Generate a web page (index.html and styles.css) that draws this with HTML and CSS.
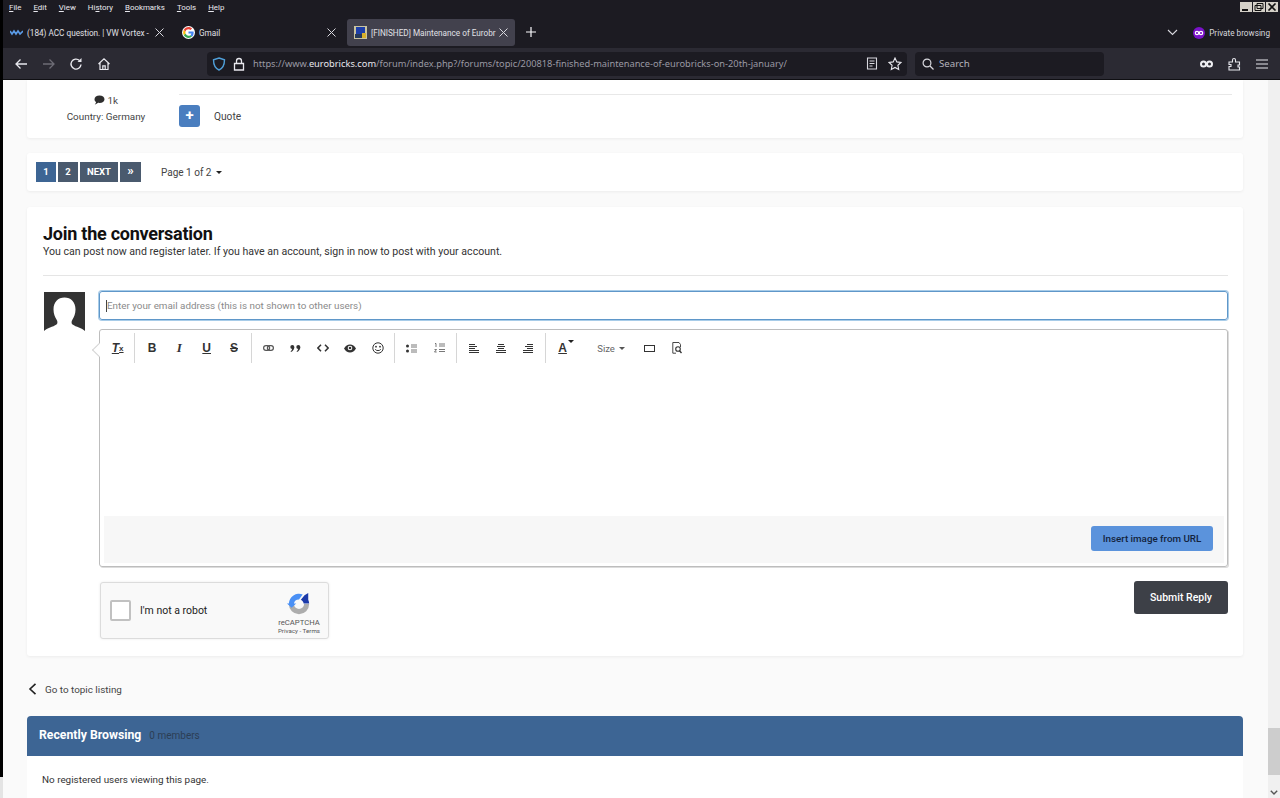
FILE: index.html
```html
<!DOCTYPE html>
<html lang="en">
<head>
    <meta charset="UTF-8">
    <meta name="viewport" content="width=device-width, initial-scale=1.0">
    <title>[FINISHED] Maintenance of Eurobricks</title>
    <link rel="stylesheet" href="styles.css">
</head>
<body>
    <!-- browser chrome -->
    <header class="chrome">
        <div class="menubar">
            <span><u>F</u>ile</span>
            <span><u>E</u>dit</span>
            <span><u>V</u>iew</span>
            <span>Hi<u>s</u>tory</span>
            <span><u>B</u>ookmarks</span>
            <span><u>T</u>ools</span>
            <span><u>H</u>elp</span>
            <div class="win-btns">
                <span class="win-btn"><svg width="10" height="8" viewBox="0 0 10 8"><path d="M1 6h6v2H1z" fill="#111"/></svg></span>
                <span class="win-btn"><svg width="10" height="8" viewBox="0 0 10 8"><path d="M3 .5h6v5H3zM1 2.500h6v5H1z" fill="none" stroke="#111"/></svg></span>
                <span class="win-btn"><svg width="10" height="8" viewBox="0 0 10 8"><path d="M1.500 .5l7 7M8.500 .5l-7 7" stroke="#111" stroke-width="1.600"/></svg></span>
            </div>
        </div>
        <div class="tabbar">
            <div class="tab">
                <svg class="tab-icon" width="13" height="13" viewBox="0 0 13 13"><path d="M0 5l2 3 2-3 2 3 2-3 2 3 3-3" fill="none" stroke="#5b9be6" stroke-width="1.600"/></svg>
                <span class="tab-title">(184) ACC question. | VW Vortex -</span>
                <svg class="tab-x" width="9" height="9" viewBox="0 0 9 9"><path d="M.5 .5l8 8M8.500 .5l-8 8" stroke="#d8d8de"/></svg>
            </div>
            <div class="tab">
                <svg class="tab-icon" width="13" height="13" viewBox="0 0 48 48"><circle cx="24" cy="24" r="24" fill="#fff"/><path d="M43 24.500c0-1.400-.1-2.700-.4-4H24v7.600h10.800c-.5 2.500-1.900 4.600-4 6l6.400 5c3.700-3.500 5.800-8.600 5.800-14.600z" fill="#4285f4"/><path d="M24 44c5.300 0 9.700-1.700 13-4.900l-6.400-5c-1.700 1.200-4 2-6.600 2-5.100 0-9.400-3.400-10.900-8l-6.600 5.100C9.800 39.700 16.400 44 24 44z" fill="#34a853"/><path d="M13.100 28.100c-.8-2.600-.8-5.500 0-8.200l-6.600-5.100c-2.800 5.600-2.800 12.800 0 18.400z" fill="#fbbc05"/><path d="M24 11.900c2.900 0 5.500 1 7.500 2.900l5.600-5.600C33.700 6 29.300 4 24 4 16.400 4 9.800 8.300 6.500 14.800l6.600 5.100c1.500-4.600 5.800-8 10.900-8z" fill="#ea4335"/></svg>
                <span class="tab-title">Gmail</span>
                <svg class="tab-x" width="9" height="9" viewBox="0 0 9 9"><path d="M.5 .5l8 8M8.500 .5l-8 8" stroke="#d8d8de"/></svg>
            </div>
            <div class="tab tab-active">
                <svg class="tab-icon" width="13" height="13" viewBox="0 0 13 13"><path d="M0 0h13v13H0z" fill="#c9c4a0"/><path d="M2 1h9v7H2z" fill="#1e3fa8"/><path d="M1 8h7v4H1z" fill="#263a5c"/><path d="M8 7h4v5H8z" fill="#d8b02a"/></svg>
                <span class="tab-title">[FINISHED] Maintenance of Eurobr</span>
                <svg class="tab-x" width="9" height="9" viewBox="0 0 9 9"><path d="M.5 .5l8 8M8.500 .5l-8 8" stroke="#d8d8de"/></svg>
            </div>
            <svg class="new-tab" width="10" height="10" viewBox="0 0 10 10"><path d="M5 0v10M0 5h10" stroke="#fbfbfe" stroke-width="1.200"/></svg>
            <div class="tabbar-right">
                <svg class="tab-list" width="11" height="7" viewBox="0 0 11 7"><path d="M1 1l4.500 4.500L10 1" fill="none" stroke="#d8d8de" stroke-width="1.100"/></svg>
                <svg width="12" height="12" viewBox="0 0 12 12"><circle cx="6" cy="6" r="6" fill="#7a12c9"/><circle cx="4" cy="6" r="1.700" fill="none" stroke="#fff" stroke-width="1.200"/><circle cx="8" cy="6" r="1.700" fill="none" stroke="#fff" stroke-width="1.200"/></svg>
                <span class="private-label">Private browsing</span>
            </div>
        </div>
        <div class="navbar">
            <div class="nav-btns">
                <svg width="14" height="14" viewBox="0 0 14 14"><path d="M13 7H2M6.500 2.500L2 7l4.500 4.500" fill="none" stroke="#e8e8ee" stroke-width="1.300"/></svg>
                <svg width="14" height="14" viewBox="0 0 14 14"><path d="M1 7h11M7.500 2.500L12 7l-4.500 4.500" fill="none" stroke="#6d6c75" stroke-width="1.300"/></svg>
                <svg width="14" height="14" viewBox="0 0 14 14"><path d="M12 7.500A5 5 0 1 1 10.500 3.500" fill="none" stroke="#e8e8ee" stroke-width="1.400"/><path d="M12.500 1v4h-4z" fill="#e8e8ee"/></svg>
                <svg width="14" height="14" viewBox="0 0 14 14"><path d="M1.500 7L7 1.800 12.500 7M3 6v6.500h8V6M5.800 12.500V8.800h2.400v3.700" fill="none" stroke="#e8e8ee" stroke-width="1.200"/></svg>
            </div>
            <div class="urlbar">
                <svg class="url-shield" width="14" height="14" viewBox="0 0 14 14"><path d="M7 1l5.500 1.800c0 5-1.500 8.500-5.500 10.200C3 11.300 1.500 7.800 1.500 2.800z" fill="none" stroke="#4f9fd8" stroke-width="1.400"/></svg>
                <svg class="url-lock" width="12" height="14" viewBox="0 0 12 14"><path d="M1.500 6.500h9v6.500h-9zM3.500 6.500V4a2.500 2.500 0 0 1 5 0v2.500" fill="none" stroke="#e8e8ee" stroke-width="1.300"/></svg>
                <span class="url-text">https://www.<b>eurobricks.com</b>/forum/index.php?/forums/topic/200818-finished-maintenance-of-eurobricks-on-20th-january/</span>
                <svg class="url-reader" width="12" height="13" viewBox="0 0 12 13"><path d="M1.500 1h9v11h-9zM3.500 4h5M3.500 6.500h5M3.500 9h3" fill="none" stroke="#d8d8de" stroke-width="1.100"/></svg>
                <svg class="url-star" width="14" height="14" viewBox="0 0 14 14"><path d="M7 1l1.800 3.900 4.200.5-3.100 2.900.8 4.200L7 10.400l-3.700 2.100.8-4.200L1 5.400l4.200-.5z" fill="none" stroke="#e8e8ee" stroke-width="1.100"/></svg>
            </div>
            <div class="searchbar">
                <svg width="12" height="12" viewBox="0 0 12 12"><circle cx="5" cy="5" r="3.900" fill="none" stroke="#d8d8de" stroke-width="1.200"/><path d="M8 8l3.500 3.500" stroke="#d8d8de" stroke-width="1.300"/></svg>
                <span>Search</span>
            </div>
            <div class="nav-right">
                <svg width="13" height="8" viewBox="0 0 13 8"><circle cx="3.500" cy="4" r="2.500" fill="none" stroke="#f0f0f4" stroke-width="2"/><circle cx="9.500" cy="4" r="2.500" fill="none" stroke="#f0f0f4" stroke-width="2"/></svg>
                <svg width="13" height="14" viewBox="0 0 13 14"><path d="M1 5h3.500V3a1.500 1.500 0 0 1 3 0v2h4v3H10v2h1.500v3H1V9.500h2v-2H1z" fill="none" stroke="#e8e8ee" stroke-width="1.100"/></svg>
                <svg width="12" height="10" viewBox="0 0 12 10"><path d="M0 1h12M0 5h12M0 9h12" stroke="#e8e8ee" stroke-width="1.200"/></svg>
            </div>
        </div>
    </header>

    <div class="viewport">
        <main class="page">
            <section class="card post-end">
                <div class="author">
                    <div class="author-count">
                        <svg width="11" height="10" viewBox="0 0 11 10"><path d="M5.500.5c2.900 0 5 1.600 5 3.700S8.400 7.900 5.500 7.900c-.5 0-1 0-1.400-.1C3.200 8.700 2 9.300.8 9.400c.7-.7 1.200-1.500 1.300-2.300C1 6.400.5 5.400.5 4.200.5 2.100 2.600.5 5.500.5z" fill="#2e2e2e"/></svg>
                        1k
                    </div>
                    <div>Country: Germany</div>
                </div>
                <div class="post-actions">
                    <div class="action-row">
                        <span class="plus-btn">+</span>
                        <span>Quote</span>
                    </div>
                </div>
            </section>

            <section class="card pager">
                <span class="page-btn page-current">1</span>
                <span class="page-btn">2</span>
                <span class="page-btn page-next">NEXT</span>
                <span class="page-btn page-last">»</span>
                <span class="page-of">Page 1 of 2 <i class="caret"></i></span>
            </section>

            <section class="card join">
                <h2>Join the conversation</h2>
                <p class="join-sub">You can post now and register later. If you have an account, sign in now to post with your account.</p>
                <div class="reply-row">
                    <svg class="avatar" width="41" height="42" viewBox="0 0 41 42"><path d="M0 0h41v42H0z" fill="#333"/><path d="M0 42v-3c3-3 9-4 12.500-6.500 1.500-1.300 1-3.500 0-5-1.500-2.500-3-5.500-3-10C9.500 10 14 5.500 20.500 5.500S31.500 10 31.500 17.500c0 4.500-1.500 7.500-3 10-1 1.500-1.500 3.700 0 5C32 35 38 36 41 39v3z" fill="#fff"/></svg>
                    <div class="reply-form">
                        <div class="email-input"><span class="cursor"></span>Enter your email address (this is not shown to other users)</div>
                        <div class="editor">
                            <div class="ed-toolbar">
                                <div class="ed-group">
                                    <span class="ed-btn ed-clear">T<sub>x</sub></span>
                                </div>
                                <div class="ed-group">
                                    <span class="ed-btn ed-b">B</span>
                                    <span class="ed-btn ed-i">I</span>
                                    <span class="ed-btn ed-u">U</span>
                                    <span class="ed-btn ed-s">S</span>
                                </div>
                                <div class="ed-group">
                                    <span class="ed-btn"><svg width="11" height="6" viewBox="0 0 11 6"><rect x=".6" y=".6" width="6" height="4.800" rx="2.400" fill="none" stroke="#555" stroke-width="1.200"/><rect x="4.400" y=".6" width="6" height="4.800" rx="2.400" fill="none" stroke="#555" stroke-width="1.200"/></svg></span>
                                    <span class="ed-btn"><svg width="11" height="7" viewBox="0 0 11 7"><circle cx="2.300" cy="2.100" r="2" fill="#333"/><path d="M4.300 2.100C4.300 4.500 3 6.300 1 7l-.4-.8c1-.6 1.500-1.600 1.500-3z" fill="#333"/><circle cx="8.300" cy="2.100" r="2" fill="#333"/><path d="M10.300 2.100c0 2.400-1.300 4.200-3.300 4.900l-.4-.8c1-.6 1.500-1.600 1.500-3z" fill="#333"/></svg></span>
                                    <span class="ed-btn"><svg width="12" height="8" viewBox="0 0 12 8"><path d="M4 .8L.9 4 4 7.200M8 .8L11.100 4 8 7.200" fill="none" stroke="#333" stroke-width="1.500"/></svg></span>
                                    <span class="ed-btn"><svg width="12" height="9" viewBox="0 0 12 9"><path d="M0 4.500C1.500 2 3.500.5 6 .5s4.500 1.500 6 4c-1.500 2.500-3.500 4-6 4s-4.500-1.500-6-4z" fill="#333"/><circle cx="6" cy="4" r="2.300" fill="#fff"/><circle cx="6" cy="4" r="1.300" fill="#333"/></svg></span>
                                    <span class="ed-btn"><svg width="12" height="12" viewBox="0 0 12 12"><circle cx="6" cy="6" r="5.200" fill="none" stroke="#333" stroke-width="1"/><circle cx="4" cy="4.700" r=".9" fill="#333"/><circle cx="8" cy="4.700" r=".9" fill="#333"/><path d="M3.200 7.300C4 9 8 9 8.800 7.300" fill="none" stroke="#333"/></svg></span>
                                </div>
                                <div class="ed-group">
                                    <span class="ed-btn"><svg width="11" height="9" viewBox="0 0 11 9"><circle cx="1.500" cy="2" r="1.500" fill="#333"/><circle cx="1.500" cy="7" r="1.500" fill="#333"/><path d="M5 1h6M5 3h6M5 6h6M5 8h6" stroke="#555" stroke-width=".8"/></svg></span>
                                    <span class="ed-btn"><svg width="11" height="10" viewBox="0 0 11 10"><path d="M1 .5h1V4M.5 6.500h2L.5 9h2.200" fill="none" stroke="#444" stroke-width=".7"/><path d="M5 1h6M5 3h6M5 6.500h6M5 8.500h6" stroke="#555" stroke-width=".8"/></svg></span>
                                </div>
                                <div class="ed-group">
                                    <span class="ed-btn"><svg width="10" height="9" viewBox="0 0 10 9"><path d="M0 .5h6M0 2.500h8M0 4.500h6M0 6.500h10M0 8.500h10" stroke="#333"/></svg></span>
                                    <span class="ed-btn"><svg width="10" height="9" viewBox="0 0 10 9"><path d="M2 .5h6M1 2.500h8M2 4.500h6M0 6.500h10M0 8.500h10" stroke="#333"/></svg></span>
                                    <span class="ed-btn"><svg width="10" height="9" viewBox="0 0 10 9"><path d="M4 .5h6M2 2.500h8M4 4.500h6M0 6.500h10M0 8.500h10" stroke="#333"/></svg></span>
                                </div>
                                <div class="ed-group ed-last">
                                    <span class="ed-btn ed-color">A<i class="caret caret-small"></i></span>
                                    <span class="ed-size">Size <i class="caret caret-small"></i></span>
                                    <span class="ed-btn"><svg width="11" height="7" viewBox="0 0 11 7"><rect x=".5" y=".5" width="10" height="6" fill="none" stroke="#333"/></svg></span>
                                    <span class="ed-btn"><svg width="10" height="12" viewBox="0 0 10 12"><path d="M7 .5H.8v10.700H4M7 .5l1.500 2V5" fill="none" stroke="#333" stroke-width=".9"/><circle cx="6" cy="7" r="2.300" fill="none" stroke="#333" stroke-width="1.100"/><path d="M7.500 8.700L9.500 11" stroke="#333" stroke-width="1.300"/></svg></span>
                                </div>
                            </div>
                            <div class="ed-area"></div>
                            <div class="ed-footer">
                                <span class="insert-btn">Insert image from URL</span>
                            </div>
                            <i class="ed-nib"></i>
                        </div>
                        <div class="submit-row">
                            <div class="recaptcha">
                                <span class="rc-check"></span>
                                <span class="rc-label">I'm not a robot</span>
                                <div class="rc-brand">
                                    <svg width="24" height="24" viewBox="0 0 26 26"><path d="M2 13A11 11 0 0 0 24 13H18.500A5.500 5.500 0 0 1 7.500 13z" fill="#adadad"/><path d="M2 12.500A11 11 0 0 1 17 2.700L13 8A5.500 5.500 0 0 0 7.500 12.500H10L5 17 0 12.500z" fill="#4a90f5"/><path d="M15 8.500L19 3.500 23 1V8.500A11 11 0 0 1 24 12.500H18C18 11 16.800 9.500 15 8.500z" fill="#1c3aa9"/></svg>
                                    <div class="rc-name">reCAPTCHA</div>
                                    <div class="rc-terms">Privacy - Terms</div>
                                </div>
                            </div>
                            <span class="submit-btn">Submit Reply</span>
                        </div>
                    </div>
                </div>
            </section>

            <a class="back-link">
                <svg width="9" height="12" viewBox="0 0 9 12"><path d="M7.500 .8L2 6l5.500 5.200" fill="none" stroke="#222" stroke-width="1.600"/></svg>
                Go to topic listing
            </a>

            <section class="browsing">
                <div class="browsing-head"><h3>Recently Browsing</h3><span>0 members</span></div>
                <div class="browsing-body">No registered users viewing this page.</div>
            </section>
        </main>
        <div class="scrollbar">
            <span class="scroll-thumb"></span>
            <svg width="8" height="5" viewBox="0 0 8 5"><path d="M.8.800L4 4l3.200-3.200" fill="none" stroke="#555" stroke-width="1.400"/></svg>
        </div>
    </div>
</body>
</html>
```

FILE: styles.css
```css
* {
    box-sizing: border-box;
}

html, body {
    margin: 0;
    height: 798px;
    overflow: hidden;
}

body {
    display: flex;
    flex-direction: column;
    font-family: Roboto, "Liberation Sans", sans-serif;
    color: #333;
    padding-left: 3px;
    background: linear-gradient(#000 777px, #e4e4e4 777px);
}

/* browser chrome */
.chrome {
    flex: none;
    height: 80px;
    background: #1c1b22;
    color: #e8e8ee;
    font-family: Roboto, "Liberation Sans", sans-serif;
    font-size: 8.200px;
}

.menubar {
    height: 15px;
    padding-left: 6px;
    display: flex;
    align-items: center;
    gap: 12px;
    font-size: 7.900px;
}

.win-btns {
    margin-left: auto;
    margin-right: 2px;
    align-self: flex-start;
    margin-top: 2px;
    display: flex;
    gap: 1px;
}

.win-btn {
    width: 12px;
    height: 10px;
    background: #d4d0c8;
    display: flex;
    align-items: center;
    justify-content: center;
}

.tabbar {
    height: 33px;
    padding-top: 4px;
    display: flex;
    align-items: flex-start;
    gap: 4px;
}

.tab {
    width: 168px;
    height: 27px;
    padding: 0 7px 0 7px;
    border-radius: 3px;
    display: flex;
    align-items: center;
}

.tab-active {
    background: #42414d;
}

.tab-icon {
    flex: none;
    margin-right: 4px;
}

.tab-title {
    flex: 1;
    white-space: nowrap;
    color: #e0e0e6;
}

.tab-x {
    flex: none;
}

.new-tab {
    margin: 8px 0 0 7px;
}

.tabbar-right {
    margin-left: auto;
    margin-right: 10px;
    height: 27px;
    display: flex;
    align-items: center;
}

.tab-list {
    margin-right: 15px;
}

.private-label {
    margin-left: 4px;
    color: #d8d8de;
}

.navbar {
    height: 32px;
    background: #2b2a33;
    border-bottom: 1px solid #101014;
    display: flex;
    align-items: center;
}

.nav-btns {
    width: 204px;
    padding-left: 11px;
    display: flex;
    gap: 13.500px;
}

.urlbar {
    width: 700px;
    height: 24px;
    background: #1c1b22;
    border-radius: 4px;
    display: flex;
    align-items: center;
    padding: 0 5px 0 5px;
    font-family: "Noto Sans", "Liberation Sans", sans-serif;
    font-size: 9.270px;
}

.url-lock {
    margin-left: 7px;
}

.url-text {
    margin-left: 8px;
    color: #9a99a3;
    white-space: nowrap;
    flex: 1;
}

.url-text b {
    color: #e8e8ee;
    font-weight: 400;
}

.url-star {
    margin-left: 10px;
}

.searchbar {
    width: 189px;
    height: 24px;
    margin-left: 8px;
    background: #1c1b22;
    border-radius: 4px;
    display: flex;
    align-items: center;
    gap: 5px;
    padding-left: 7px;
    font-family: "Noto Sans", "Liberation Sans", sans-serif;
    font-size: 9.700px;
    color: #b4b3bb;
}

.nav-right {
    margin-left: 96px;
    display: flex;
    align-items: center;
    gap: 15px;
}

/* page */
.viewport {
    flex: 1;
    min-height: 0;
    display: flex;
    background: #fafafa;
}

.page {
    width: 1265px;
    padding: 0 25px 0 24px;
    font-size: 9.900px;
}

.card {
    background: #fff;
    border-radius: 0 0 3px 3px;
    box-shadow: 0 1px 3px rgba(0, 0, 0, .06);
}

.post-end {
    display: flex;
    height: 58px;
}

.author {
    width: 152px;
    padding: 13px 0 0 6px;
    text-align: center;
    line-height: 15.500px;
    color: #444;
}

.author-count svg {
    vertical-align: -1px;
}

.post-actions {
    flex: 1;
    margin: 14px 11px 0 0;
    border-top: 1px solid #e8e8e8;
}

.action-row {
    display: flex;
    align-items: center;
    gap: 14px;
    margin-top: 10px;
    font-size: 10.200px;
    color: #444;
}

.plus-btn {
    width: 21px;
    height: 22px;
    border-radius: 3px;
    background: #4a7ebf;
    color: #fff;
    font-size: 15px;
    font-weight: 700;
    line-height: 21px;
    text-align: center;
}

.pager {
    margin-top: 15px;
    height: 38px;
    padding: 9px 9px 0;
    display: flex;
    gap: 2px;
    border-radius: 3px;
}

.page-btn {
    width: 20px;
    height: 20px;
    background: #4a5a6e;
    color: #fff;
    font-size: 9.500px;
    font-weight: 700;
    line-height: 20px;
    text-align: center;
}

.page-current {
    background: #3d6594;
}

.page-next {
    width: 38px;
}

.page-last {
    width: 21px;
    font-size: 13px;
    line-height: 18px;
}

.page-of {
    margin-left: 18px;
    line-height: 21px;
    color: #444;
    font-size: 10px;
}

.caret {
    display: inline-block;
    margin-left: 2px;
    border: 3px solid transparent;
    border-top: 3px solid #222;
    border-bottom: 0;
    vertical-align: 2px;
}

.join {
    margin-top: 16px;
    height: 449px;
    padding: 16px 15px 0 16px;
    border-radius: 3px;
}

.join h2 {
    margin: 0;
    font-size: 18px;
    line-height: 22px;
    letter-spacing: -.25px;
    color: #111;
}

.join-sub {
    margin: 0;
    height: 31px;
    border-bottom: 1px solid #e5e5e5;
    font-size: 10.600px;
    line-height: 14px;
    color: #333;
}

.reply-row {
    display: flex;
    margin-top: 15px;
}

.avatar {
    flex: none;
    margin: 1px 14px 0 1px;
}

.reply-form {
    flex: 1;
    min-width: 0;
}

.email-input {
    height: 29px;
    border: 1px solid #5f97c9;
    border-radius: 3px;
    box-shadow: 0 0 0 1px #a8cce8;
    padding-left: 6px;
    display: flex;
    align-items: center;
    font-size: 9.850px;
    color: #8a8a8a;
}

.cursor {
    width: 1px;
    height: 12px;
    background: #444;
}

.editor {
    position: relative;
    margin-top: 9px;
    height: 238px;
    border: 1px solid #bdbdbd;
    border-radius: 3px;
    padding: 0 3px 3px 4px;
    box-shadow: 1px 1px 0 #dcdcdc;
}

.ed-nib {
    position: absolute;
    left: -6px;
    top: 15px;
    width: 10px;
    height: 10px;
    background: #fff;
    border-left: 1px solid #d4d4d4;
    border-bottom: 1px solid #d4d4d4;
    transform: rotate(45deg);
}

.ed-toolbar {
    height: 37px;
    padding-top: 3px;
    display: flex;
    align-items: flex-start;
}

.ed-group {
    display: flex;
    height: 30px;
    padding-right: 3px;
    margin-right: 3px;
    border-right: 1px solid #d6d6d6;
}

.ed-last {
    border-right: 0;
}

.ed-btn {
    width: 27.330px;
    height: 30px;
    display: flex;
    align-items: center;
    justify-content: center;
    position: relative;
    color: #333;
    font-size: 12px;
    font-weight: 700;
    font-family: "Liberation Sans", sans-serif;
}

.ed-clear {
    font-style: italic;
    font-size: 12px;
    text-decoration: underline;
}

.ed-clear sub {
    font-size: 8px;
    font-style: normal;
}

.ed-i {
    font-style: italic;
    font-family: "Liberation Serif", serif;
    font-size: 13px;
}

.ed-u {
    text-decoration: underline;
}

.ed-s {
    text-decoration: line-through;
}

.ed-color {
    text-decoration: underline;
}

.caret-small {
    position: absolute;
    top: 7px;
    right: 2px;
    margin: 0;
}

.ed-size {
    width: 60px;
    padding-left: 21px;
    font-size: 9.500px;
    line-height: 31px;
    color: #666;
}

.ed-size .caret-small {
    position: static;
    margin-left: 2px;
    border-top-color: #555;
}

.ed-area {
    height: 149px;
}

.ed-footer {
    height: 47px;
    background: #f7f7f7;
    padding: 10px 11px 0 0;
    display: flex;
    justify-content: flex-end;
}

.insert-btn {
    width: 122px;
    height: 25px;
    border-radius: 3px;
    background: #5b93dc;
    color: #13233c;
    font-size: 9.800px;
    font-weight: 500;
    line-height: 25px;
    text-align: center;
}

.submit-row {
    display: flex;
    justify-content: space-between;
    align-items: flex-start;
    margin-top: 15px;
}

.recaptcha {
    width: 229px;
    height: 57px;
    margin-left: 1px;
    padding-left: 9px;
    display: flex;
    align-items: center;
    background: #f9f9f9;
    border: 1px solid #dcdcdc;
    border-radius: 3px;
    box-shadow: 0 0 3px rgba(0, 0, 0, .08);
}

.rc-check {
    flex: none;
    width: 21px;
    height: 21px;
    background: #fff;
    border: 2px solid #c1c1c1;
    border-radius: 2px;
}

.rc-label {
    margin-left: 9px;
    flex: 1;
    font-size: 10.500px;
    color: #222;
}

.rc-brand {
    width: 58px;
    padding-top: 6px;
    text-align: center;
    color: #555;
    line-height: 9px;
}

.rc-brand svg {
    display: block;
    margin: 0 auto 2px;
}

.rc-name {
    font-size: 7.700px;
}

.rc-terms {
    font-size: 6.200px;
}

.submit-btn {
    width: 94px;
    height: 33px;
    margin-top: -1px;
    border-radius: 3px;
    background: #3d4047;
    color: #fff;
    font-size: 10.500px;
    font-weight: 500;
    line-height: 33px;
    text-align: center;
}

.back-link {
    height: 18px;
    margin-top: 24px;
    display: flex;
    align-items: center;
    gap: 8px;
    color: #444;
    text-decoration: none;
    padding-left: 1px;
}

.browsing {
    margin-top: 18px;
}

.browsing-head {
    height: 40px;
    padding: 0 0 2px 12px;
    display: flex;
    align-items: center;
    gap: 8px;
    background: #3d6594;
    border-radius: 4px 4px 0 0;
}

.browsing-head h3 {
    margin: 0;
    color: #fff;
    font-size: 12.250px;
    font-weight: 700;
}

.browsing-head span {
    color: #2c3e55;
    font-size: 10px;
}

.browsing-body {
    background: #fff;
    height: 60px;
    padding: 17px 15px;
    line-height: 14px;
    color: #333;
}

.scrollbar {
    position: relative;
    width: 12px;
    background: #f0f0f0;
    display: flex;
    flex-direction: column;
    align-items: center;
    padding-top: 648px;
}

.scroll-thumb {
    width: 12px;
    height: 47px;
    background: #cdcdcd;
}

.scrollbar svg {
    margin-top: 15px;
}
```
